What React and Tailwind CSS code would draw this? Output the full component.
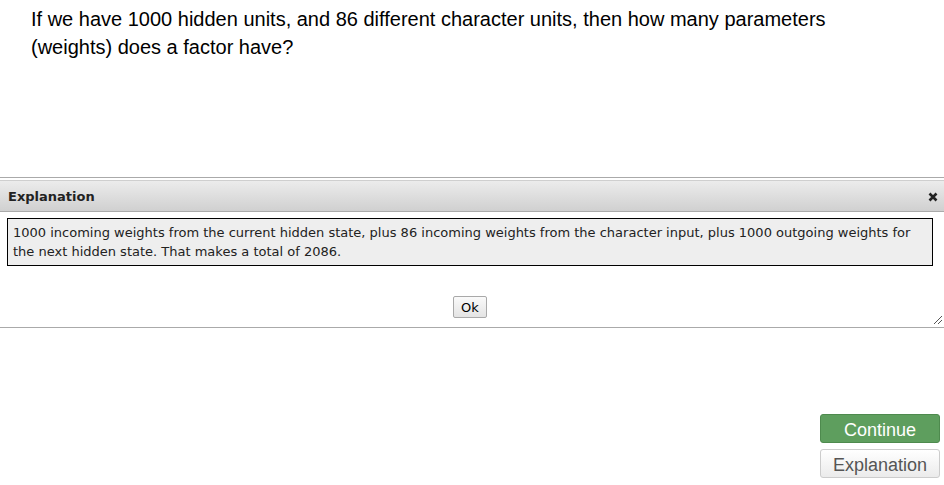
export default function App() {
  const sans = { fontFamily: '"Liberation Sans", Arial, sans-serif' };
  const dv = { fontFamily: '"DejaVu Sans", Verdana, sans-serif' };
  return (
    <div className="w-[944px] h-[485px] bg-white overflow-hidden flex flex-col">
      <div className="h-[177px] pl-[31px] pt-[5px] shrink-0">
        <p className="w-[820px] text-[20px] leading-[28px] text-black" style={sans}>
          If we have 1000 hidden units, and 86 different character units, then how many parameters (weights) does a factor have?
        </p>
      </div>

      <div className="relative h-[151px] shrink-0 border-t border-b border-[#aaaaaa] pt-[2px]" style={dv}>
        <div className="h-[32px] flex items-center justify-between pl-[8px] pr-[6px] pt-[1px] border-t border-b border-t-[#cfcfcf] border-b-[#aaaaaa] bg-gradient-to-b from-[#ececec] to-[#d0d0d0]">
          <span className="text-[13px] font-bold text-[#222]">Explanation</span>
          <svg width="10" height="10" viewBox="0 0 10 10">
            <path d="M1.5 1.5 L8.5 8.5 M8.5 1.5 L1.5 8.5" stroke="#222" strokeWidth="2.6" strokeLinecap="butt" />
          </svg>
        </div>

        <div className="mx-[7px] mr-[11px] mt-[6px] border border-black bg-[#eeeeee] px-[5px] py-[4px] text-[13px] leading-[19px] text-[#222]">
          1000 incoming weights from the current hidden state, plus 86 incoming weights from the character input, plus 1000 outgoing weights for the next hidden state. That makes a total of 2086.
        </div>

        <div className="flex justify-center mt-[30px] pr-[4px]">
          <button className="h-[22px] px-[7px] text-[13px] text-black border border-[#a9a9a9] rounded-[2px] bg-gradient-to-b from-[#fafafa] to-[#e4e4e4] leading-none">
            Ok
          </button>
        </div>

        <svg className="absolute right-[1px] bottom-[2px]" width="10" height="10" viewBox="0 0 10 10">
          <path d="M9 1 L1 9 M9 5 L5 9" stroke="#555" strokeWidth="1" />
        </svg>
      </div>

      <div className="flex flex-col items-end gap-[6px] pr-[4px] pt-[86px]" style={sans}>
        <button className="w-[120px] h-[29px] pt-[2px] rounded-[3px] bg-[#5e9e5e] border border-[#4e8a4e] text-white text-[18px] leading-none">
          Continue
        </button>
        <button className="w-[120px] h-[29px] pt-[2px] rounded-[3px] bg-gradient-to-b from-[#ffffff] to-[#ebebeb] border border-[#cccccc] text-[#555] text-[18px] leading-none">
          Explanation
        </button>
      </div>
    </div>
  );
}
